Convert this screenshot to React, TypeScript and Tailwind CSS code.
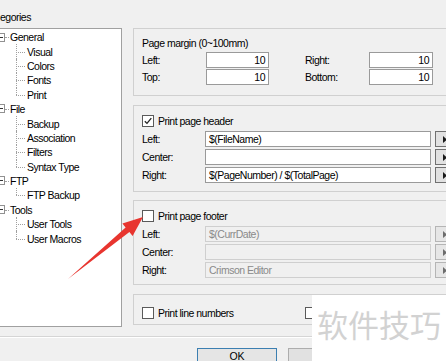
import React from "react";

const font = { fontFamily: '"Liberation Sans", Arial, sans-serif' };

const tree: { name: string; children: string[] }[] = [
  { name: "General", children: ["Visual", "Colors", "Fonts", "Print"] },
  { name: "File", children: ["Backup", "Association", "Filters", "Syntax Type"] },
  { name: "FTP", children: ["FTP Backup"] },
  { name: "Tools", children: ["User Tools", "User Macros"] },
];

function TopRow({ name }: { name: string }) {
  return (
    <div className="relative flex h-[14.4px] items-center">
      <div className="absolute left-[-4px] top-[2.5px] flex h-[9px] w-[9px] items-center justify-center border border-[#919191] bg-white">
        <div className="h-px w-[5px] bg-[#333]" />
      </div>
      <div className="absolute left-[5px] top-1/2 w-[4px] border-t border-dotted border-[#a0a0a0]" />
      <span className="ml-[10px] whitespace-nowrap">{name}</span>
    </div>
  );
}

function ChildRow({ name, last }: { name: string; last: boolean }) {
  return (
    <div className="flex h-[14.4px] items-center">
      <div className="w-[16px] shrink-0" />
      <div className="relative w-[10px] shrink-0 self-stretch">
        <div
          className={
            last
              ? "absolute left-0 top-0 h-1/2 border-l border-dotted border-[#a0a0a0]"
              : "absolute left-0 top-0 h-full border-l border-dotted border-[#a0a0a0]"
          }
        />
        <div className="absolute left-0 top-1/2 w-[9px] border-t border-dotted border-[#a0a0a0]" />
      </div>
      <span className="ml-[1px] whitespace-nowrap">{name}</span>
    </div>
  );
}

function Check({ checked, dim }: { checked?: boolean; dim?: boolean }) {
  return (
    <div
      className={
        "relative h-[12px] w-[12px] shrink-0 border bg-white " +
        (dim ? "border-[#8a8a8a]" : "border-[#5a5a5a]")
      }
    >
      {checked && (
        <svg className="absolute left-[1px] top-[1px]" width="8" height="8" viewBox="0 0 8 8">
          <path d="M0.8 4.2 L3 6.4 L7.3 1.2" fill="none" stroke="#222" strokeWidth="1.3" />
        </svg>
      )}
    </div>
  );
}

function SideBtn({ disabled }: { disabled?: boolean }) {
  return (
    <div
      className={
        "relative ml-[4px] h-[16px] w-[18px] shrink-0 border " +
        (disabled ? "border-[#b5b5b5] bg-[#e6e6e6]" : "border-[#707070] bg-[#e1e1e1]")
      }
    >
      <svg className="absolute left-[7px] top-[4px]" width="4" height="7" viewBox="0 0 4 7">
        <path d="M0 0 L4 3.5 L0 7 Z" fill={disabled ? "#6d6d6d" : "#1a1a1a"} />
      </svg>
    </div>
  );
}

function FieldRow({ label, value, disabled }: { label: string; value: string; disabled?: boolean }) {
  return (
    <div className="flex h-[16px] items-center">
      <div className="w-[63px] shrink-0">{label}</div>
      <div
        className={
          "flex h-[16px] w-[226px] shrink-0 items-center border px-[3px] " +
          (disabled ? "border-[#cfcfcf] bg-[#f0f0f0] text-[#8a8a8a]" : "border-[#9a9a9a] bg-white")
        }
      >
        <span className="whitespace-nowrap">{value}</span>
      </div>
      <SideBtn disabled={disabled} />
    </div>
  );
}

function NumBox({ v, w }: { v: string; w: string }) {
  return (
    <div className={"flex h-[16px] shrink-0 items-center justify-end border border-[#9a9a9a] bg-white pr-[3px] " + w}>
      {v}
    </div>
  );
}

export default function App() {
  return (
    <div
      className="relative h-[361px] w-[446px] overflow-hidden bg-[#f0f0f0] text-[10.5px] leading-[14px] tracking-[-0.5px] text-black"
      style={font}
    >
      <div className="flex items-start">
        {/* Left column */}
        <div className="w-[122px] shrink-0">
          <div className="h-[28px] pt-[10px]">egories</div>
          <div className="h-[299px] border-y border-r border-[#a0a0a0] bg-white pt-[1px]">
            {tree.map((g) => (
              <div key={g.name}>
                <TopRow name={g.name} />
                {g.children.map((c, i) => (
                  <ChildRow key={c} name={c} last={i === g.children.length - 1} />
                ))}
              </div>
            ))}
          </div>
        </div>

        {/* Right column */}
        <div className="ml-[11px] flex w-[330px] shrink-0 flex-col pt-[28px]">
          {/* Page margin */}
          <div className="h-[68px] border border-[#d0d0d0] px-[8px] pt-[7px]">
            <div className="h-[14px] whitespace-nowrap">Page margin (0~100mm)</div>
            <div className="mt-[2px] flex h-[16px] items-center">
              <div className="w-[64px] shrink-0">Left:</div>
              <NumBox v="10" w="w-[63px]" />
              <div className="ml-[36px] w-[64px] shrink-0">Right:</div>
              <NumBox v="10" w="w-[64px]" />
            </div>
            <div className="mt-[1px] flex h-[16px] items-center">
              <div className="w-[64px] shrink-0">Top:</div>
              <NumBox v="10" w="w-[63px]" />
              <div className="ml-[36px] w-[64px] shrink-0">Bottom:</div>
              <NumBox v="10" w="w-[64px]" />
            </div>
          </div>

          {/* Header */}
          <div className="mt-[9px] h-[87px] border border-[#d0d0d0] px-[8px] pt-[9px]">
            <div className="flex h-[12px] items-center gap-[4px]">
              <Check checked />
              <span className="whitespace-nowrap">Print page header</span>
            </div>
            <div className="mt-[4px] flex flex-col gap-[2px]">
              <FieldRow label="Left:" value="$(FileName)" />
              <FieldRow label="Center:" value="" />
              <FieldRow label="Right:" value="$(PageNumber) / $(TotalPage)" />
            </div>
          </div>

          {/* Footer */}
          <div className="mt-[8px] h-[85px] border border-[#d0d0d0] px-[8px] pt-[9px]">
            <div className="flex h-[12px] items-center gap-[4px]">
              <Check />
              <span className="whitespace-nowrap">Print page footer</span>
            </div>
            <div className="mt-[4px] flex flex-col gap-[2px]">
              <FieldRow label="Left:" value="$(CurrDate)" disabled />
              <FieldRow label="Center:" value="" disabled />
              <FieldRow label="Right:" value="Crimson Editor" disabled />
            </div>
          </div>

          {/* Line numbers */}
          <div className="mt-[9px] h-[31px] border border-[#d0d0d0] px-[8px] pt-[12px]">
            <div className="flex h-[12px] items-center">
              <Check />
              <span className="ml-[4px] w-[147px] whitespace-nowrap">Print line numbers</span>
              <Check />
            </div>
          </div>
        </div>
      </div>

      {/* separator */}
      <div className="mt-[9px] border-t border-[#d5d5d5]" />
      <div className="h-px bg-white" />

      {/* buttons */}
      <div className="mt-[10px] flex pl-[197px]">
        <div className="flex h-[23px] w-[80px] items-start justify-center border border-[#3c7fb1] bg-[#e5e5e5] pt-[1px] leading-[12px] tracking-normal">
          OK
        </div>
        <div className="ml-[11px] h-[23px] w-[80px] border border-[#adadad] bg-[#e1e1e1]" />
      </div>

      {/* watermark overlay */}
      <div className="absolute left-[312px] top-[295px] flex h-[66px] w-[134px] items-start bg-white pl-[5px] pt-[13px]">
        <span
          className="whitespace-nowrap text-[31px] leading-[32px] tracking-normal text-[#d2d2d2]"
          style={{ fontFamily: '"Noto Sans CJK SC", sans-serif' }}
        >
          软件技巧
        </span>
      </div>

      {/* red arrow annotation */}
      <svg className="pointer-events-none absolute left-0 top-0" width="446" height="361" viewBox="0 0 446 361">
        <polygon
          points="143,217 132.6,236 129.4,232.1 68,279 125.6,227.5 122.4,223.6"
          fill="#e8352f"
        />
      </svg>
    </div>
  );
}
